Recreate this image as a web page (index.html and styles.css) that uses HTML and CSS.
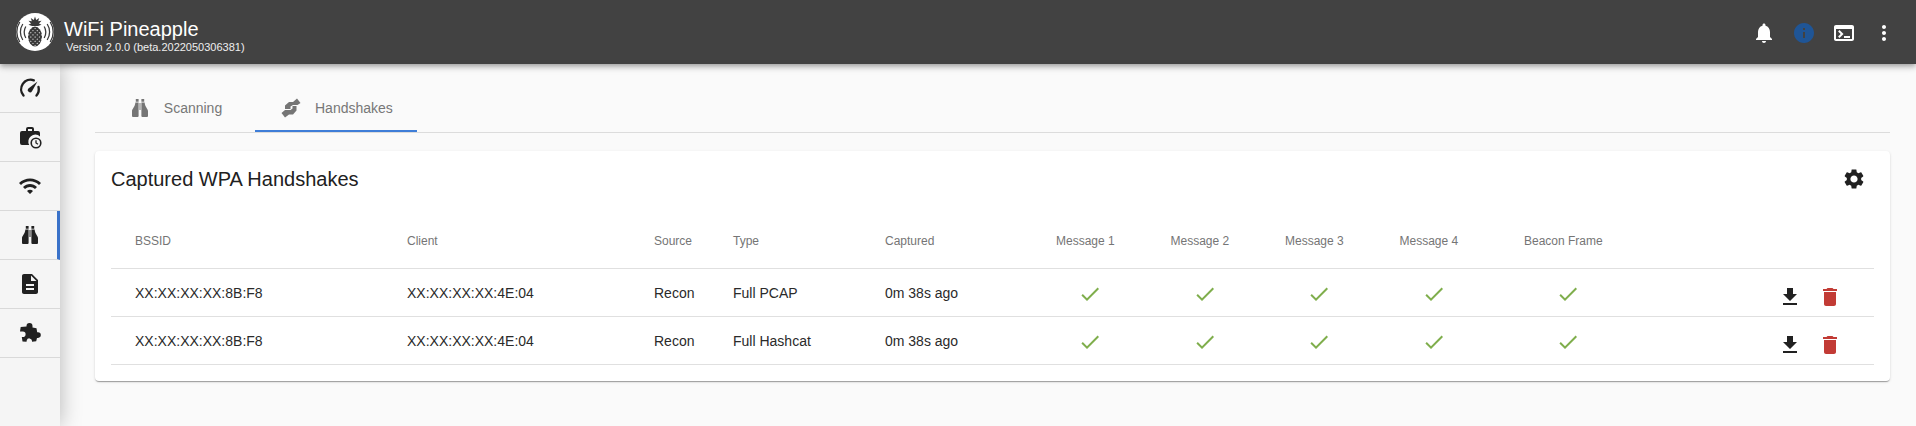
FILE: index.html
```html
<!DOCTYPE html>
<html lang="en">
<head>
<meta charset="utf-8">
<title>WiFi Pineapple</title>
<link rel="stylesheet" href="styles.css">
</head>
<body>
<svg class="defs" width="0" height="0" aria-hidden="true">
  <defs>
    <symbol id="i-check" viewBox="0 0 24 24"><path d="M9 16.17L4.83 12l-1.42 1.41L9 19 21 7l-1.41-1.41z"/></symbol>
    <symbol id="i-download" viewBox="0 0 24 24"><path d="M19 9h-4V3H9v6H5l7 7 7-7zM5 18v2h14v-2H5z"/></symbol>
    <symbol id="i-delete" viewBox="0 0 24 24"><path d="M6 19c0 1.1.9 2 2 2h8c1.1 0 2-.9 2-2V7H6v12zM19 4h-3.5l-1-1h-5l-1 1H5v2h14V4z"/></symbol>
    <symbol id="i-binoculars" viewBox="0 0 24 24"><path d="M7.800 3h2.800v2.800H7.800zM13.400 3h2.800v2.800h-2.800zM11.500 7v7h1V7zM7.400 6.400h3.200V20a1 1 0 0 1-1 1H5a1 1 0 0 1-1-1v-5c0-2.500 2.800-3.500 3.400-8.600zM16.600 6.400h-3.200V20a1 1 0 0 0 1 1H19a1 1 0 0 0 1-1v-5c0-2.500-2.800-3.500-3.400-8.600z"/></symbol>
    <symbol id="i-hands" viewBox="0 0 24 24"><path d="M18 2.500l3.500 4.500-3 2h-4.500l-2.500 1.500v2.500H6V9.500L10 6h4zM6 21.500L2.500 17l3.500-3h5.500l2-1.500V10h4v4.500L14 18.500h-4z"/></symbol>
  </defs>
</svg>

<header class="toolbar">
  <svg class="logo" viewBox="0 0 38 38" aria-hidden="true">
    <defs>
      <pattern id="hatch" width="3" height="3" patternUnits="userSpaceOnUse" patternTransform="rotate(45)">
        <rect width="3" height="3" fill="#3a3a3a"/>
        <rect width="1" height="1" fill="#fff"/>
      </pattern>
    </defs>
    <circle cx="19" cy="19" r="19" fill="#fff"/>
    <path d="M19 3.500l1.200 3.500 3-2-1 3.300 3.300-.5-2.500 2.600 2.500 1.300-3.500 1.300h-6l-3.500-1.300 2.500-1.300-2.500-2.600 3.300.5-1-3.300 3 2z" fill="#3a3a3a"/>
    <ellipse cx="19" cy="23.500" rx="7" ry="10" fill="url(#hatch)"/>
    <g class="logo-waves">
      <path d="M9.800 13.500c-2 3.500-2 8 0 11.500"/>
      <path d="M6.800 11c-3.200 4.800-3.200 11.200 0 16"/>
      <path d="M3.800 9c-4 6-4 14 0 20"/>
      <path d="M28.200 13.500c2 3.500 2 8 0 11.500"/>
      <path d="M31.200 11c3.200 4.800 3.200 11.200 0 16"/>
      <path d="M34.200 9c4 6 4 14 0 20"/>
    </g>
  </svg>
  <div class="brand">
    <div class="brand-name">WiFi Pineapple</div>
    <div class="brand-version">Version 2.0.0 (beta.2022050306381)</div>
  </div>
  <div class="toolbar-actions">
    <button class="icon-btn"><svg class="icon icon-white" viewBox="0 0 24 24"><path d="M12 22c1.100 0 2-.9 2-2h-4c0 1.100.89 2 2 2zm6-6v-5c0-3.070-1.640-5.640-4.500-6.320V4c0-.83-.67-1.500-1.500-1.500s-1.500.67-1.500 1.500v.68C7.630 5.360 6 7.920 6 11v5l-2 2v1h16v-1l-2-2z"/></svg></button>
    <button class="icon-btn"><svg class="icon icon-info" viewBox="0 0 24 24"><path d="M12 2C6.480 2 2 6.480 2 12s4.480 10 10 10 10-4.480 10-10S17.520 2 12 2zm1 15h-2v-6h2v6zm0-8h-2V7h2v2z"/></svg></button>
    <button class="icon-btn"><svg class="icon icon-white" viewBox="0 0 24 24"><path d="M20 4H4c-1.110 0-2 .9-2 2v12c0 1.100.89 2 2 2h16c1.100 0 2-.9 2-2V6c0-1.100-.89-2-2-2zm0 14H4V8h16v10zm-2-1h-6v-2h6v2zM7.500 17l-1.410-1.410L8.670 13l-2.590-2.590L7.500 9l4 4-4 4z"/></svg></button>
    <button class="icon-btn"><svg class="icon icon-white" viewBox="0 0 24 24"><path d="M12 8c1.100 0 2-.9 2-2s-.9-2-2-2-2 .9-2 2 .9 2 2 2zm0 2c-1.100 0-2 .9-2 2s.9 2 2 2 2-.9 2-2-.9-2-2-2zm0 6c-1.100 0-2 .9-2 2s.9 2 2 2 2-.9 2-2-.9-2-2-2z"/></svg></button>
  </div>
</header>

<div class="shell">
  <nav class="rail">
    <a class="rail-item"><svg class="icon" viewBox="0 0 24 24"><path class="gauge-arc" d="M5.500 19.500A9.500 9.500 0 0 1 15.800 4.300"/><path class="gauge-arc" d="M18.500 19.500a9.500 9.500 0 0 0 2-8.500"/><path d="M19.500 5.500l-5.500 9.800a2.300 2.300 0 0 1-3.900-2.500z"/></svg></a>
    <a class="rail-item"><svg class="icon" viewBox="0 0 24 24"><path d="M10 2h4a2 2 0 0 1 2 2v2h4a2 2 0 0 1 2 2v3.400A7 7 0 0 0 11.200 20H4a2 2 0 0 1-2-2V8a2 2 0 0 1 2-2h4V4a2 2 0 0 1 2-2zm0 2v2h4V4z"/><circle class="clock-face" cx="18" cy="18" r="4.800"/><path class="clock-hands" d="M18 15.300V18l2 1.300"/></svg></a>
    <a class="rail-item"><svg class="icon" viewBox="0 0 24 24"><path d="M1 9l2 2c4.970-4.970 13.030-4.970 18 0l2-2C16.930 2.930 7.080 2.930 1 9zm8 8l3 3 3-3c-1.650-1.660-4.340-1.660-6 0zm-4-4l2 2c2.760-2.760 7.240-2.760 10 0l2-2C15.140 9.140 8.870 9.140 5 13z"/></svg></a>
    <a class="rail-item rail-active"><svg class="icon"><use href="#i-binoculars"/></svg></a>
    <a class="rail-item"><svg class="icon" viewBox="0 0 24 24"><path d="M14 2H6c-1.100 0-1.990.9-1.990 2L4 20c0 1.100.89 2 1.990 2H18c1.100 0 2-.9 2-2V8l-6-6zm2 16H8v-2h8v2zm0-4H8v-2h8v2zm-3-5V3.500L18.500 9H13z"/></svg></a>
    <a class="rail-item"><svg class="icon" viewBox="0 0 24 24"><path d="M11.500 2a3 3 0 0 1 3 3v1.500l4 .8.700 4h.8a2.800 2.800 0 0 1 0 5.600h-1l-.8 3.300-4.200.6v-1a2.700 2.700 0 0 0-5.300-.4l-.2 1.400-4-.4-.7-4.400h1a2.800 2.800 0 0 0 0-5.600H2l.7-4.400 5.800-.400V5a3 3 0 0 1 3-3z"/></svg></a>
  </nav>

  <main class="content">
    <div class="tabs">
      <div class="tab"><svg class="icon"><use href="#i-binoculars"/></svg><span>Scanning</span></div>
      <div class="tab tab-active"><svg class="icon"><use href="#i-hands"/></svg><span>Handshakes</span></div>
    </div>

    <section class="card">
      <div class="card-head">
        <h2 class="card-title">Captured WPA Handshakes</h2>
        <button class="icon-btn"><svg class="icon" viewBox="0 0 24 24"><path d="M19.140 12.940c.04-.3.06-.61.06-.94 0-.32-.02-.64-.07-.94l2.030-1.580c.18-.14.23-.41.12-.61l-1.920-3.320c-.12-.22-.37-.29-.59-.22l-2.390.96c-.5-.38-1.030-.7-1.620-.94l-.36-2.540c-.04-.24-.24-.41-.48-.41h-3.840c-.24 0-.43.17-.47.41l-.36 2.540c-.59.24-1.130.57-1.620.94l-2.390-.96c-.22-.08-.47 0-.59.22L2.740 8.870c-.12.21-.08.47.12.61l2.030 1.580c-.05.3-.09.63-.09.94s.02.64.07.94l-2.030 1.580c-.18.14-.23.41-.12.61l1.920 3.320c.12.22.37.29.59.22l2.390-.96c.5.38 1.030.7 1.620.94l.36 2.540c.05.24.24.41.48.41h3.840c.24 0 .44-.17.47-.41l.36-2.540c.59-.24 1.130-.56 1.620-.94l2.390.96c.22.08.47 0 .59-.22l1.920-3.320c.12-.22.07-.47-.12-.61l-2.010-1.580zM12 15.600c-1.980 0-3.600-1.620-3.600-3.600s1.620-3.600 3.600-3.600 3.600 1.620 3.600 3.600-1.620 3.600-3.600 3.600z"/></svg></button>
      </div>
      <table class="table">
        <colgroup>
          <col class="c-bssid"><col class="c-client"><col class="c-source"><col class="c-type"><col class="c-captured"><col class="c-msg"><col class="c-msg"><col class="c-msg"><col class="c-msg"><col class="c-beacon"><col class="c-actions">
        </colgroup>
        <thead>
          <tr><th>BSSID</th><th>Client</th><th>Source</th><th>Type</th><th>Captured</th><th class="th-msg">Message 1</th><th class="th-msg">Message 2</th><th class="th-msg">Message 3</th><th class="th-msg">Message 4</th><th class="th-beacon">Beacon Frame</th><th></th></tr>
        </thead>
        <tbody>
          <tr>
            <td>XX:XX:XX:XX:8B:F8</td><td>XX:XX:XX:XX:4E:04</td><td>Recon</td><td>Full PCAP</td><td>0m 38s ago</td>
            <td class="ok"><svg class="icon icon-ok"><use href="#i-check"/></svg></td>
            <td class="ok"><svg class="icon icon-ok"><use href="#i-check"/></svg></td>
            <td class="ok"><svg class="icon icon-ok"><use href="#i-check"/></svg></td>
            <td class="ok"><svg class="icon icon-ok"><use href="#i-check"/></svg></td>
            <td class="ok"><svg class="icon icon-ok"><use href="#i-check"/></svg></td>
            <td class="row-actions"><button class="icon-btn"><svg class="icon"><use href="#i-download"/></svg></button><button class="icon-btn"><svg class="icon icon-del"><use href="#i-delete"/></svg></button></td>
          </tr>
          <tr>
            <td>XX:XX:XX:XX:8B:F8</td><td>XX:XX:XX:XX:4E:04</td><td>Recon</td><td>Full Hashcat</td><td>0m 38s ago</td>
            <td class="ok"><svg class="icon icon-ok"><use href="#i-check"/></svg></td>
            <td class="ok"><svg class="icon icon-ok"><use href="#i-check"/></svg></td>
            <td class="ok"><svg class="icon icon-ok"><use href="#i-check"/></svg></td>
            <td class="ok"><svg class="icon icon-ok"><use href="#i-check"/></svg></td>
            <td class="ok"><svg class="icon icon-ok"><use href="#i-check"/></svg></td>
            <td class="row-actions"><button class="icon-btn"><svg class="icon"><use href="#i-download"/></svg></button><button class="icon-btn"><svg class="icon icon-del"><use href="#i-delete"/></svg></button></td>
          </tr>
        </tbody>
      </table>
    </section>
  </main>
</div>
</body>
</html>
```

FILE: styles.css
```css
* { box-sizing: border-box; }
html, body { height: 100%; }
body {
  margin: 0;
  height: 426px;
  overflow: hidden;
  display: flex;
  flex-direction: column;
  background: #fafafa;
  color: #212121;
  font-family: "Liberation Sans", Arial, sans-serif;
  font-size: 14px;
}
.defs { display: block; height: 0; }
.icon { display: block; width: 24px; height: 24px; fill: #212121; }
.icon-white { fill: #fff; }
.icon-info { fill: #1f5596; }
.icon-ok { fill: #7fae4c; }
.icon-del { fill: #c23b35; }
.gauge-arc { fill: none; stroke: #212121; stroke-width: 2.400; stroke-linecap: round; }
.clock-face { fill: #f5f5f5; stroke: #212121; stroke-width: 1.600; }
.clock-hands { fill: none; stroke: #212121; stroke-width: 1.300; }
.icon-btn {
  display: flex;
  align-items: center;
  justify-content: center;
  width: 40px;
  height: 40px;
  padding: 0;
  border: 0;
  background: none;
}

.toolbar {
  position: relative;
  z-index: 3;
  flex: none;
  display: flex;
  align-items: center;
  height: 64px;
  padding: 0 12px 0 16px;
  background: #424242;
  color: #fff;
  box-shadow: 0 2px 4px -1px rgba(0,0,0,.2), 0 4px 5px rgba(0,0,0,.14), 0 1px 10px rgba(0,0,0,.12);
}
.logo { flex: none; width: 38px; height: 38px; margin-right: 10px; }
.logo-waves path { fill: none; stroke: #3a3a3a; stroke-width: 1.300; }
.brand { display: flex; flex-direction: column; padding-top: 4px; }
.brand-name { font-size: 20px; line-height: 24px; margin-top: 2px; }
.brand-version { font-size: 11px; line-height: 12px; margin-left: 2px; color: #eee; }
.toolbar-actions { margin-left: auto; display: flex; padding-top: 2px; }

.shell { flex: 1; display: flex; min-height: 0; }
.rail {
  position: relative;
  z-index: 2;
  flex: none;
  width: 60px;
  background: #f5f5f5;
  box-shadow: 0 0 22px rgba(0,0,0,.28);
}
.rail-item {
  display: flex;
  align-items: center;
  justify-content: center;
  height: 49px;
  border-bottom: 1px solid #d9d9d9;
}
.rail-active { border-right: 3px solid #3a72c9; padding-left: 3px; }

.content { flex: 1; min-width: 0; padding: 20px 26px 0 35px; }
.tabs { display: flex; height: 49px; border-bottom: 1px solid #dcdcdc; }
.tab {
  display: flex;
  align-items: center;
  justify-content: center;
  gap: 12px;
  min-width: 160px;
  height: 48px;
  padding: 0 24px;
  color: #777;
}
.tab .icon { fill: #757575; }
.tab-active { border-bottom: 2px solid #3f7ed8; padding-top: 2px; }

.card {
  margin-top: 18px;
  height: 230px;
  padding: 8px 16px 0;
  background: #fff;
  border-radius: 4px;
  box-shadow: 0 2px 1px -1px rgba(0,0,0,.2), 0 1px 1px rgba(0,0,0,.14), 0 1px 3px rgba(0,0,0,.12);
}
.card-head { display: flex; align-items: center; justify-content: space-between; height: 40px; }
.card-title { margin: 0; font-size: 20px; font-weight: 400; line-height: 32px; color: #212121; }

.table { width: 100%; border-collapse: collapse; table-layout: fixed; margin-top: 13px; }
.c-bssid { width: 272px; }
.c-client { width: 247px; }
.c-source { width: 79px; }
.c-type { width: 152px; }
.c-captured { width: 172px; }
.c-msg { width: 114.500px; }
.c-beacon { width: 153px; }
th {
  height: 56px;
  padding: 3px 0 0 24px;
  text-align: left;
  font-size: 12px;
  font-weight: 400;
  color: #757575;
  border-bottom: 1px solid #e0e0e0;
}
th.th-msg { padding-left: 23px; }
th.th-beacon { padding-left: 33px; }
td {
  height: 48px;
  padding: 2px 0 0 24px;
  color: #2a2a2a;
  border-bottom: 1px solid #e0e0e0;
}
td.ok { padding: 4px 0 0; }
.ok .icon { margin: 0 auto; }
td.row-actions { padding: 9px 24px 0 0; text-align: right; }
.row-actions .icon-btn { display: inline-flex; vertical-align: middle; height: 24px; }
```
